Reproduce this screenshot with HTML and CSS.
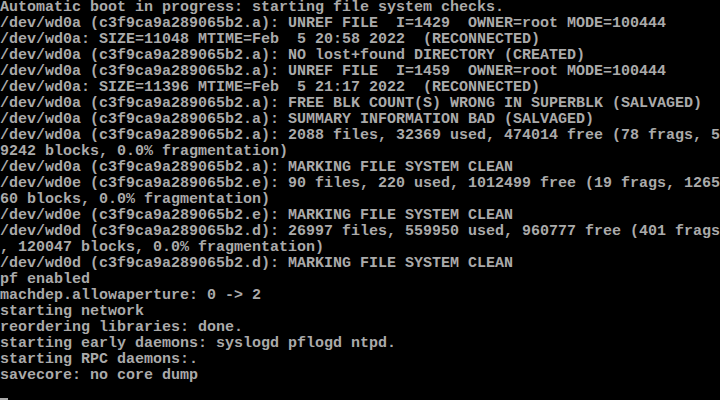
FILE: index.html
```html
<!DOCTYPE html>
<html>
<head>
<meta charset="utf-8">
<link rel="stylesheet" href="styles.css">
</head>
<body>
<pre class="console">Automatic boot in progress: starting file system checks.
/dev/wd0a (c3f9ca9a289065b2.a): UNREF FILE  I=1429  OWNER=root MODE=100444
/dev/wd0a: SIZE=11048 MTIME=Feb  5 20:58 2022  (RECONNECTED)
/dev/wd0a (c3f9ca9a289065b2.a): NO lost+found DIRECTORY (CREATED)
/dev/wd0a (c3f9ca9a289065b2.a): UNREF FILE  I=1459  OWNER=root MODE=100444
/dev/wd0a: SIZE=11396 MTIME=Feb  5 21:17 2022  (RECONNECTED)
/dev/wd0a (c3f9ca9a289065b2.a): FREE BLK COUNT(S) WRONG IN SUPERBLK (SALVAGED)
/dev/wd0a (c3f9ca9a289065b2.a): SUMMARY INFORMATION BAD (SALVAGED)
/dev/wd0a (c3f9ca9a289065b2.a): 2088 files, 32369 used, 474014 free (78 frags, 5
9242 blocks, 0.0% fragmentation)
/dev/wd0a (c3f9ca9a289065b2.a): MARKING FILE SYSTEM CLEAN
/dev/wd0e (c3f9ca9a289065b2.e): 90 files, 220 used, 1012499 free (19 frags, 1265
60 blocks, 0.0% fragmentation)
/dev/wd0e (c3f9ca9a289065b2.e): MARKING FILE SYSTEM CLEAN
/dev/wd0d (c3f9ca9a289065b2.d): 26997 files, 559950 used, 960777 free (401 frags
, 120047 blocks, 0.0% fragmentation)
/dev/wd0d (c3f9ca9a289065b2.d): MARKING FILE SYSTEM CLEAN
pf enabled
machdep.allowaperture: 0 -&gt; 2
starting network
reordering libraries: done.
starting early daemons: syslogd pflogd ntpd.
starting RPC daemons:.
savecore: no core dump
<span class="cursor"></span></pre>
</body>
</html>
```

FILE: styles.css
```css
html, body {
  margin: 0;
  padding: 0;
  background: #000;
  width: 720px;
  height: 400px;
  overflow: hidden;
}
.console {
  margin: 0;
  padding: 0;
  font-family: "Liberation Mono", "DejaVu Sans Mono", monospace;
  font-size: 15px;
  line-height: 16px;
  font-weight: bold;
  color: #aaaaaa;
  white-space: pre;
}
.cursor {
  display: inline-block;
  width: 8px;
  height: 16px;
  box-sizing: border-box;
  border-bottom: 2px solid #aaaaaa;
  border-top: 12px solid transparent;
  vertical-align: top;
}
```
